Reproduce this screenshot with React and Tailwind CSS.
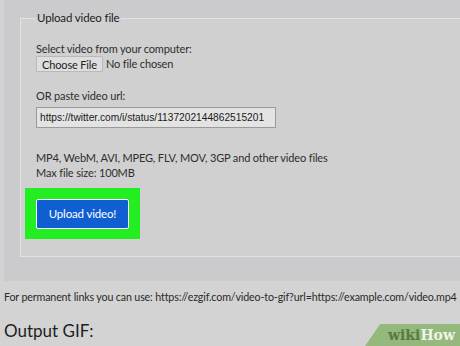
export default function App() {
  return (
    <div
      className="relative w-[460px] h-[346px] overflow-hidden bg-[#d3d3d3] pl-[4px] text-[#2e2e2e] tracking-[-0.15px]"
      style={{ fontFamily: 'Lato, "Noto Sans", sans-serif' }}
    >
      <div className="w-[520px] bg-[#cbcbcd] pl-[16px] pb-[24px]">
        <fieldset className="relative top-[8px] border border-[#e2e2e2] bg-[#d0d0d0] pl-[15px] pb-[17px] mb-[8px]">
          <legend className="px-[1px] text-[11.5px] leading-[20px] text-[#222]">Upload video file</legend>
          <div className="mt-[13px] text-[11px] leading-[16px]">Select video from your computer:</div>
          <div className="-mt-[1px] flex items-center gap-[3px] text-[11px]">
            <button className="h-[16px] w-[67px] flex items-center justify-center border border-[#b9b9b9] bg-[#dedede] rounded-[1px] text-[11px] leading-none text-[#222]">
              Choose File
            </button>
            <span className="leading-[16px]">No file chosen</span>
          </div>
          <div className="mt-[16px] text-[11px] leading-[16px]">OR paste video url:</div>
          <div
            className="mt-[3px] w-[240px] h-[21px] border border-[#9a9a9a] bg-[#e3e3e3] flex items-center pl-[3px] text-[10.2px] tracking-normal text-[#1a1a1a] whitespace-nowrap overflow-hidden"
            style={{ fontFamily: '"Liberation Sans", Arial, sans-serif' }}
          >
            https://twitter.com/i/status/1137202144862515201
          </div>
          <div className="mt-[22px] text-[11px] leading-[15px]">
            MP4, WebM, AVI, MPEG, FLV, MOV, 3GP and other video files
          </div>
          <div className="text-[11px] leading-[15px]">Max file size: 100MB</div>
          <div className="mt-[8px] -ml-[11px] w-[115px] h-[51px] bg-[#22ee22] flex items-center pl-[11px]">
            <button className="w-[93px] h-[30px] bg-[#0f5fd3] border border-white rounded-[2px] text-white text-[11.5px] leading-none">
              Upload video!
            </button>
          </div>
        </fieldset>
      </div>
      <div className="mt-[8px] text-[10.7px] leading-[16px] whitespace-nowrap text-[#2a2a2a]">
        For permanent links you can use: https://ezgif.com/video-to-gif?url=https://example.com/video.mp4
      </div>
      <div className="mt-[14px] text-[17px] leading-[24px] tracking-normal text-[#1e1e1e]">Output GIF:</div>
      <div className="absolute right-0 bottom-0 h-[22px] w-[95px] bg-[#95b97c] [clip-path:polygon(16%_0,100%_0,100%_100%,0_100%)] flex items-center justify-end pr-[5px] tracking-normal">
        <span className="text-[14px] font-bold leading-none" style={{ fontFamily: '"DejaVu Serif", serif' }}>
          <span className="text-[#587a42]">wiki</span>
          <span className="text-[#eef4e8]">How</span>
        </span>
      </div>
    </div>
  );
}
